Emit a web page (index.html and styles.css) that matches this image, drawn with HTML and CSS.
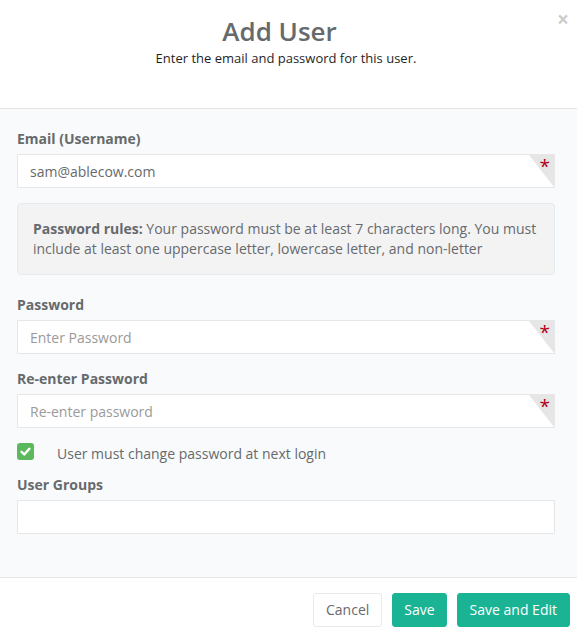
FILE: index.html
```html
<!DOCTYPE html>
<html lang="en">
<head>
<meta charset="utf-8">
<title>Add User</title>
<link rel="stylesheet" href="styles.css">
</head>
<body>
<div class="modal">
  <header class="modal-header">
    <button class="close" type="button" aria-label="Close">&times;</button>
    <h4 class="modal-title">Add User</h4>
    <p class="modal-sub">Enter the email and password for this user.</p>
  </header>
  <div class="modal-body">
    <div class="form-group">
      <label class="label">Email (Username)</label>
      <div class="field required">
        <input class="form-control" type="text" value="sam@ablecow.com">
        <span class="req">*</span>
      </div>
    </div>
    <div class="alert"><strong>Password rules:</strong> Your password must be at least 7 characters long. You must include at least one uppercase letter, lowercase letter, and non-letter</div>
    <div class="form-group">
      <label class="label">Password</label>
      <div class="field required">
        <input class="form-control" type="password" placeholder="Enter Password">
        <span class="req">*</span>
      </div>
    </div>
    <div class="form-group">
      <label class="label">Re-enter Password</label>
      <div class="field required">
        <input class="form-control" type="password" placeholder="Re-enter password">
        <span class="req">*</span>
      </div>
    </div>
    <div class="check-row">
      <span class="check">
        <svg viewBox="0 0 17 17" width="17" height="17"><path d="M4.5 8.8 L7.3 11.4 L12.4 5.8" fill="none" stroke="#fff" stroke-width="2.4" stroke-linecap="round" stroke-linejoin="round"/></svg>
      </span>
      <span class="check-label">User must change password at next login</span>
    </div>
    <div class="form-group last">
      <label class="label">User Groups</label>
      <div class="field">
        <input class="form-control" type="text">
      </div>
    </div>
  </div>
  <footer class="modal-footer">
    <button class="btn btn-white" type="button">Cancel</button>
    <button class="btn btn-primary btn-save" type="button">Save</button>
    <button class="btn btn-primary" type="button">Save and Edit</button>
  </footer>
</div>
</body>
</html>
```

FILE: styles.css
```css
* { box-sizing: border-box; }
html, body { margin: 0; padding: 0; }
body {
  font-family: "Open Sans", "Liberation Sans", sans-serif;
  font-size: 14px;
  color: #676a6c;
  background: #ffffff;
  overflow: hidden;
}
.modal { width: 577px; }
.modal-header {
  position: relative;
  background: #fff;
  padding: 17px 18px 40px 0;
  border-bottom: 1px solid #e5e5e5;
  text-align: center;
}
.close {
  position: absolute;
  top: 9px;
  right: 8px;
  border: 0;
  background: transparent;
  padding: 0;
  font-family: "Open Sans", "Liberation Sans", sans-serif;
  font-size: 21px;
  font-weight: 700;
  line-height: 1;
  color: #000;
  opacity: 0.2;
}
.modal-title {
  margin: 0;
  font-size: 26px;
  font-weight: 600;
  line-height: 28px;
  color: #676a6c;
}
.modal-sub {
  margin: 3px 0 0 0;
  padding-left: 13px;
  font-size: 13px;
  line-height: 20px;
  color: #1f1f1f;
}
.modal-body {
  background: #f8fafb;
  padding: 20px 22px 30px 17px;
}
.form-group { margin-bottom: 15px; }
.form-group.last { margin-bottom: 13px; }
.label {
  display: block;
  font-weight: 700;
  line-height: 20px;
  margin-bottom: 5px;
  color: #676a6c;
}
.field { position: relative; }
.form-control {
  display: block;
  width: 100%;
  height: 34px;
  padding: 6px 12px;
  font-family: "Open Sans", "Liberation Sans", sans-serif;
  font-size: 14px;
  line-height: 20px;
  color: #676a6c;
  background: #fff;
  border: 1px solid #e5e6e7;
  border-radius: 1px;
  outline: none;
}
.form-control::placeholder { color: #9a9a9a; }
.required::after {
  content: "";
  position: absolute;
  top: 1px;
  right: 1px;
  width: 25px;
  height: 32px;
  background: #e6e6e6;
  clip-path: polygon(0 0, 100% 0, 100% 100%);
}
.req {
  position: absolute;
  top: 2px;
  right: 5px;
  z-index: 1;
  font-size: 19px;
  line-height: 20px;
  font-weight: 400;
  color: #b0001a;
}
.alert {
  background: #f3f3f4;
  border: 1px solid #e7eaec;
  border-radius: 4px;
  padding: 15px;
  line-height: 20px;
  margin-bottom: 20px;
  color: #676a6c;
}
.alert strong { font-weight: 700; }
.check-row {
  display: flex;
  align-items: flex-start;
  margin-top: -1px;
  margin-bottom: 11px;
}
.check {
  width: 17px;
  height: 17px;
  margin-top: 1px;
  border-radius: 3px;
  background: #5cb85c;
  display: flex;
}
.check-label {
  margin-left: 23px;
  margin-top: 2px;
  line-height: 20px;
  color: #676a6c;
}
.modal-footer {
  background: #fff;
  border-top: 1px solid #e5e5e5;
  padding: 15px 7px 15px 0;
  display: flex;
  justify-content: flex-end;
  gap: 10px;
}
.btn {
  height: 34px;
  padding: 6px 12px;
  font-family: "Open Sans", "Liberation Sans", sans-serif;
  font-size: 14px;
  line-height: 20px;
  border-radius: 3px;
  border: 1px solid transparent;
}
.btn-save { padding: 6px 11px; }
.btn-white {
  background: #fff;
  border-color: #e7eaec;
  color: #676a6c;
}
.btn-primary {
  background: #1ab394;
  border-color: #1ab394;
  color: #fff;
}
```
